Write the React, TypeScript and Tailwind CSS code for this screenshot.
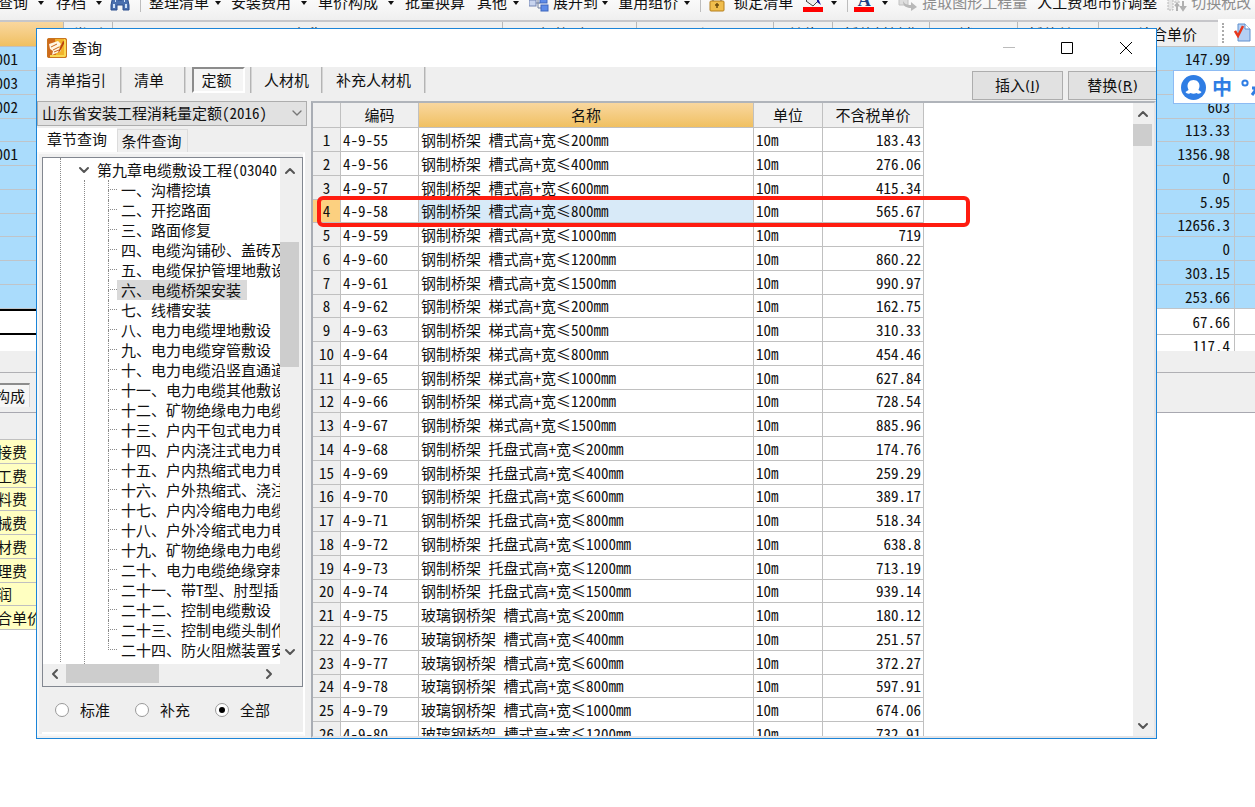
import React from 'react'
import { ChevronDown, ChevronLeft, ChevronRight, ChevronUp } from 'lucide-react'

const rows: [string, string, string][] = [
  ['4-9-55', '钢制桥架 槽式高+宽≤200mm', '183.43'],
  ['4-9-56', '钢制桥架 槽式高+宽≤400mm', '276.06'],
  ['4-9-57', '钢制桥架 槽式高+宽≤600mm', '415.34'],
  ['4-9-58', '钢制桥架 槽式高+宽≤800mm', '565.67'],
  ['4-9-59', '钢制桥架 槽式高+宽≤1000mm', '719'],
  ['4-9-60', '钢制桥架 槽式高+宽≤1200mm', '860.22'],
  ['4-9-61', '钢制桥架 槽式高+宽≤1500mm', '990.97'],
  ['4-9-62', '钢制桥架 梯式高+宽≤200mm', '162.75'],
  ['4-9-63', '钢制桥架 梯式高+宽≤500mm', '310.33'],
  ['4-9-64', '钢制桥架 梯式高+宽≤800mm', '454.46'],
  ['4-9-65', '钢制桥架 梯式高+宽≤1000mm', '627.84'],
  ['4-9-66', '钢制桥架 梯式高+宽≤1200mm', '728.54'],
  ['4-9-67', '钢制桥架 梯式高+宽≤1500mm', '885.96'],
  ['4-9-68', '钢制桥架 托盘式高+宽≤200mm', '174.76'],
  ['4-9-69', '钢制桥架 托盘式高+宽≤400mm', '259.29'],
  ['4-9-70', '钢制桥架 托盘式高+宽≤600mm', '389.17'],
  ['4-9-71', '钢制桥架 托盘式高+宽≤800mm', '518.34'],
  ['4-9-72', '钢制桥架 托盘式高+宽≤1000mm', '638.8'],
  ['4-9-73', '钢制桥架 托盘式高+宽≤1200mm', '713.19'],
  ['4-9-74', '钢制桥架 托盘式高+宽≤1500mm', '939.14'],
  ['4-9-75', '玻璃钢桥架 槽式高+宽≤200mm', '180.12'],
  ['4-9-76', '玻璃钢桥架 槽式高+宽≤400mm', '251.57'],
  ['4-9-77', '玻璃钢桥架 槽式高+宽≤600mm', '372.27'],
  ['4-9-78', '玻璃钢桥架 槽式高+宽≤800mm', '597.91'],
  ['4-9-79', '玻璃钢桥架 槽式高+宽≤1000mm', '674.06'],
  ['4-9-80', '玻璃钢桥架 槽式高+宽≤1200mm', '732.91'],
]

const sections = [
  '一、沟槽挖填',
  '二、开挖路面',
  '三、路面修复',
  '四、电缆沟铺砂、盖砖及',
  '五、电缆保护管埋地敷设',
  '六、电缆桥架安装',
  '七、线槽安装',
  '八、电力电缆埋地敷设',
  '九、电力电缆穿管敷设',
  '十、电力电缆沿竖直通道',
  '十一、电力电缆其他敷设',
  '十二、矿物绝缘电力电缆',
  '十三、户内干包式电力电',
  '十四、户内浇注式电力电',
  '十五、户内热缩式电力电',
  '十六、户外热缩式、浇注',
  '十七、户内冷缩电力电缆',
  '十八、户外冷缩式电力电',
  '十九、矿物绝缘电力电缆',
  '二十、电力电缆绝缘穿刺',
  '二十一、带T型、肘型插',
  '二十二、控制电缆敷设',
  '二十三、控制电缆头制作',
  '二十四、防火阻燃装置安',
]

const sheet = [
  ['001', '147.99'],
  ['003', ''],
  ['002', '603'],
  ['', '113.33'],
  ['001', '1356.98'],
  ['', '0'],
  ['', '5.95'],
  ['', '12656.3'],
  ['', '0'],
  ['', '303.15'],
  ['', '253.66'],
]

const fees = ['接费', '工费', '料费', '械费', '材费', '理费', '润', '合单价']

function Arrow() {
  return (
    <svg className="h-5 w-1.5 shrink-0" viewBox="0 0 6 20">
      <path d="M0 9h6L3 13z" fill="#111" />
    </svg>
  )
}

function Binoculars() {
  return (
    <svg className="h-5 w-5 shrink-0" viewBox="0 0 20 20">
      <path d="M3 4h5v4h4V4h5l2 9v5h-6v-5H7v5H1v-5z" fill="#4a6fae" stroke="#2c4f8e" />
      <path d="M3 12h2v4H3zM15 12h2v4h-2zM5 6h1v4H5zM14 6h1v4h-1z" fill="#cfe0f7" />
    </svg>
  )
}

function ExpandIcon() {
  return (
    <svg className="h-5 w-5 shrink-0" viewBox="0 0 20 20">
      <path d="M6 11h5M9 7v9h4" fill="none" stroke="#6a7a9a" />
      <rect x="0" y="8" width="7" height="6" fill="#c8d4ee" stroke="#7486b4" />
      <rect x="11" y="5" width="7" height="6" fill="#5d8be8" stroke="#3e66bd" />
      <rect x="12" y="13" width="7" height="6" fill="#5d8be8" stroke="#3e66bd" />
    </svg>
  )
}

function LockIcon() {
  return (
    <svg className="h-5 w-4 shrink-0" viewBox="0 0 16 20">
      <path d="M4 9V6a4 4 0 0 1 8 0v3" fill="none" stroke="#a0a0a0" strokeWidth="2" />
      <rect x="1" y="9" width="14" height="10" rx="1" fill="#f0bd4c" stroke="#b57f1c" />
      <path d="M8 11v5M6 13h4" stroke="#6b4a0c" strokeWidth="1.5" />
    </svg>
  )
}

function FillIcon() {
  return (
    <svg className="h-5 w-5 shrink-0" viewBox="0 0 20 20">
      <path d="M3 9l6-6 6 6-5 5z" fill="#eee" stroke="#444" />
      <path d="M14 4l4 9-4-3z" fill="#12129a" />
      <rect x="0" y="15" width="20" height="5" fill="#ff0000" />
    </svg>
  )
}

function FontColorIcon() {
  return (
    <span className="flex h-5 w-5 shrink-0 flex-col items-center justify-end font-['Liberation_Serif',serif] text-[18px] font-bold leading-[14px] text-[#1d3f86]">
      A
      <span className="h-[5px] w-5 bg-[#ff0000]" />
    </span>
  )
}

function GrayIcon() {
  return (
    <svg className="h-5 w-5 shrink-0" viewBox="0 0 20 20">
      <path d="M1 5h9v8H1z" fill="#dedede" stroke="#c2c2c2" />
      <path d="M5 9c2 4 5 4 8 4v-3l6 5-6 4v-3c-5 0-8-2-8-7z" fill="#b9b9b9" />
    </svg>
  )
}

function SwapIcon() {
  return (
    <svg className="h-5 w-5 shrink-0" viewBox="0 0 20 20">
      <path d="M1 7h5v11H1zM8 7h4v4H8z" fill="#e6e6e6" stroke="#b8b8b8" strokeDasharray="2 1" />
      <path d="M10 19v-6M8 14l2-2 2 2M16 9v8M14 15l2 3 2-3z" fill="#b8b8b8" stroke="#b0b0b0" strokeWidth="2" />
    </svg>
  )
}

function QueryIcon() {
  return (
    <svg className="h-5 w-5" viewBox="0 0 20 20">
      <rect width="20" height="20" rx="2" fill="#cf6a1c" />
      <path d="M8 1h11v17H9z" fill="#f2b22a" />
      <path d="M2 6l9-3 3 3-2 3 2 4-9 4 1-4-3-2z" fill="#fff6e2" />
      <path d="M4 9l6-3M6 12l6-3M7 14l5-2" stroke="#c9661a" />
      <path d="M16 3l2 1-5 9-2 2 1-3z" fill="#b8400f" />
      <path d="M18 1v17H3" stroke="#f9d952" strokeWidth="2" fill="none" />
      <rect x=".5" y=".5" width="19" height="19" rx="2" fill="none" stroke="#c8761e" />
    </svg>
  )
}

function Sep() {
  return <span className="h-5 w-px shrink-0 bg-[#bdbdbd]" />
}

function Toolbar() {
  return (
    <div className="flex h-[22px] items-end gap-2.5 overflow-hidden whitespace-nowrap border-b-2 border-[#c6c6ca] bg-gradient-to-b from-[#fafafa] to-[#efefef] pb-2 leading-5 [&>svg]:translate-y-0">
      <button className="-ml-0.5 shrink-0">查询</button>
      <Arrow />
      <button className="ml-0.5 shrink-0">存档</button>
      <Arrow />
      <span className="-ml-0.5 flex"><Binoculars /></span>
      <Sep />
      <button className="-ml-0.5 shrink-0">整理清单</button>
      <span className="-ml-1 flex"><Arrow /></span>
      <button className="shrink-0">安装费用</button>
      <Arrow />
      <button className="ml-px shrink-0">单价构成</button>
      <Arrow />
      <button className="ml-px shrink-0">批量换算</button>
      <button className="ml-0.5 shrink-0">其他</button>
      <span className="-ml-1 flex"><Arrow /></span>
      <ExpandIcon />
      <button className="-ml-1.5 shrink-0">展开到</button>
      <span className="-ml-1.5 flex"><Arrow /></span>
      <button className="shrink-0">重用组价</button>
      <span className="-ml-1 flex"><Arrow /></span>
      <Sep />
      <span className="-ml-0.5 flex"><LockIcon /></span>
      <button className="-ml-0.5 shrink-0">锁定清单</button>
      <FillIcon />
      <span className="-ml-0.5 flex"><Arrow /></span>
      <Sep />
      <span className="-ml-1 flex"><FontColorIcon /></span>
      <span className="-ml-0.5 flex"><Arrow /></span>
      <GrayIcon />
      <button className="-ml-1.5 shrink-0 text-[#8d8d8d]">提取图形工程量</button>
      <button className="shrink-0">人工费地市价调整</button>
      <SwapIcon />
      <button className="-ml-1.5 shrink-0 text-[#8d8d8d]">切换税改</button>
    </div>
  )
}

function Background() {
  const head = 'flex shrink-0 items-center justify-center border-r border-[#b8b8b8]'
  return (
    <div className="overflow-hidden">
      <Toolbar />
      <div className="flex h-[25px] overflow-hidden whitespace-nowrap border-b border-[#c0c0c0] bg-[#efefef]">
        <div className="w-16 shrink-0 border-r border-[#b8b8b8] bg-gradient-to-b from-[#f9d79e] to-[#f0c060]" />
        <div className={head + ' w-[49px]'}>类别</div>
        <div className={head + ' w-[390px]'}>名称</div>
        <div className={head + ' w-[134px]'}>规格型号</div>
        <div className={head + ' w-[137px]'}>工程量</div>
        <div className={head + ' w-[59px]'}>单位</div>
        <div className={head + ' w-[97px]'}>暂估材料费</div>
        <div className={head + ' w-[88px]'}>锁量</div>
        <div className={head + ' w-[81px]'}>暂估单价</div>
        <div className="flex min-w-[136px] grow items-center justify-center pr-5">综合单价</div>
      </div>
      <div className="bg-[#aadcfc]">
        {sheet.map((r, i) => (
          <div key={i} className="flex h-6 border-b border-[#c0c4c8] nth-[4n]:h-[23px]">
            <span className="flex w-[18px] items-center justify-end">{r[0]}</span>
            <span className="flex grow items-center justify-end border-r border-[#c0c4c8] pr-1">{r[1]}</span>
            <span className="w-5" />
          </div>
        ))}
      </div>
      <div className="flex h-[26px] bg-white">
        <span className="w-9 border-y-2 border-black" />
        <span className="flex grow items-center justify-end border-b border-r border-[#c0c0c0] pr-1">67.66</span>
        <span className="w-5 border-b border-[#c0c0c0]" />
      </div>
      <div className="flex h-4 overflow-hidden">
        <span className="flex h-[22px] grow items-center justify-end border-r border-[#c0c0c0] pr-1">117.4</span>
        <span className="w-5" />
      </div>
      <div className="h-[22px] border-b border-[#b0b0b4] bg-[#efefef]" />
      <div className="flex h-10 items-center border-b border-[#a8a8b0] bg-[#efefef] pt-1">
        <button className="flex h-6 w-[30px] items-center justify-end whitespace-nowrap border-r border-t-2 border-r-[#d8d8d8] border-t-[#8c8c8c] bg-[#f6f6f6] pr-1">构成</button>
      </div>
      <div className="w-16">
        <div className="h-[27px] border-b border-[#c0c0c0] bg-[#efefef]" />
        {fees.map((f) => (
          <div key={f} className="flex h-6 items-center border-b border-[#c0c0c0] bg-[#ffffc1] -indent-[3px] nth-[4n]:h-[23px]">
            {f}
          </div>
        ))}
      </div>
    </div>
  )
}

function TitleBar() {
  return (
    <div className="flex h-[38px] shrink-0 items-center bg-white pl-2.5">
      <QueryIcon />
      <h1 className="ml-[5px] grow">查询</h1>
      <button aria-label="最小化" className="flex w-[58px] justify-center">
        <svg className="h-3 w-3" viewBox="0 0 12 12"><path d="M0 5.5h12" stroke="#bbb" /></svg>
      </button>
      <button aria-label="最大化" className="flex w-[58px] justify-center">
        <svg className="h-3 w-3" viewBox="0 0 12 12"><path d="M.5.5h11v11H.5z" fill="none" stroke="#000" /></svg>
      </button>
      <button aria-label="关闭" className="flex w-[60px] justify-center">
        <svg className="h-3 w-3" viewBox="0 0 12 12"><path d="M0 0l12 12M12 0L0 12" stroke="#000" /></svg>
      </button>
    </div>
  )
}

function ActionBar() {
  const line = <span className="h-[26px] w-0.5 border-l border-r border-l-[#b4b4b4] border-r-[#d4d4d4]" />
  return (
    <div className="flex h-[34px] shrink-0 items-start">
      <div className="flex h-[26px] grow items-center">
        <button className="px-[9px] pr-3.5">清单指引</button>
        {line}
        <button className="px-3 pr-5">清单</button>
        {line}
        <button className="ml-1.5 mr-[5px] h-[26px] w-[53px] border-2 border-b-white border-l-[#8c8c8c] border-r-white border-t-[#8c8c8c] bg-[#f5f5f5] pr-1">定额</button>
        {line}
        <button className="px-3">人材机</button>
        {line}
        <button className="px-[13px]">补充人材机</button>
        {line}
      </div>
      <button className="mr-[5px] mt-1 h-[29px] w-[91px] border border-[#adadad] bg-[#e1e1e1]">
        插入<span className="font-['DejaVu_Sans',sans-serif] text-sm">(<u>I</u>)</span>
      </button>
      <button className="mt-1 h-[29px] w-[88px] border border-r-0 border-[#adadad] bg-[#e1e1e1]">
        替换<span className="font-['DejaVu_Sans',sans-serif] text-sm">(<u>R</u>)</span>
      </button>
    </div>
  )
}

function Tree() {
  const dots = 'border-dotted border-[#8a8a8a]'
  return (
    <div className="flex min-h-0 grow flex-col border border-[#828790] bg-white">
      <div className="flex min-h-0 grow">
        <div className="min-w-0 grow overflow-hidden whitespace-nowrap pb-0.5">
          <div className={'ml-[17px] h-full border-l pt-0.5 ' + dots}>
            <div className="flex h-5 items-center">
              <ChevronDown className="ml-[15px] size-4 shrink-0 text-[#555]" strokeWidth={3} />
              <span className="ml-[5px]">第九章电缆敷设工程(03040</span>
            </div>
            <div className={'ml-[23px] border-l pb-1 pl-[23px] ' + dots}>
              <ul>
                {sections.map((s, i) => (
                  <li key={s} className="flex h-5 items-center">
                    <span className="w-[9px] shrink-0">
                      <span className={'block h-2.5 border-b border-l ' + dots} />
                      <span className={i < sections.length - 1 ? 'block h-2.5 border-l ' + dots : 'block h-2.5'} />
                    </span>
                    <span className={i === 5 ? 'h-5 bg-[#d9d9d9] pl-1 pr-1.5 leading-5' : 'h-5 pl-1 leading-5'}>{s}</span>
                  </li>
                ))}
              </ul>
            </div>
          </div>
        </div>
        <div className="flex w-[22px] shrink-0 flex-col bg-[#efefef] pr-[3px]">
          <div className="flex h-[84px] justify-center pt-[5px]"><ChevronUp className="size-4 text-[#555]" strokeWidth={3} /></div>
          <div className="h-[125px] bg-[#cdcdcd]" />
          <div className="flex grow items-end justify-center pb-1"><ChevronDown className="size-4 text-[#555]" strokeWidth={3} /></div>
        </div>
      </div>
      <div className="flex h-[22px] shrink-0 items-start bg-[#efefef]">
        <ChevronLeft className="ml-1 mt-0.5 size-4 text-[#555]" strokeWidth={3} />
        <div className="ml-[3px] h-[19px] w-[93px] bg-[#cdcdcd]" />
        <div className="grow" />
        <ChevronRight className="mr-[25px] mt-0.5 size-4 text-[#555]" strokeWidth={3} />
      </div>
    </div>
  )
}

function Radio({ label, on }: { label: string; on?: boolean }) {
  return (
    <label className="flex w-20 items-center gap-[11px]">
      <input
        type="radio"
        name="scope"
        defaultChecked={on}
        className="flex size-3.5 appearance-none items-center justify-center rounded-full border border-[#999] bg-white before:size-1.5 before:rounded-full checked:before:bg-black"
      />
      {label}
    </label>
  )
}

function Sidebar() {
  return (
    <div className="flex w-[270px] shrink-0 flex-col">
      <div className="relative shrink-0">
        <select aria-label="定额库" className="h-[25px] w-full appearance-none border border-[#adadad] bg-[#e1e1e1] pb-0.5 pl-1">
          <option>山东省安装工程消耗量定额(2016)</option>
        </select>
        <ChevronDown className="pointer-events-none absolute right-0.5 top-1 size-4 text-[#777]" />
      </div>
      <div className="flex h-[26px] shrink-0 items-end pt-1">
        <button className="h-6 w-20 bg-white pb-0.5">章节查询</button>
        <button className="h-[23px] w-[71px] border border-b-0 border-[#dcdcdc] pr-0.5">条件查询</button>
      </div>
      <div className="mb-0.5 mr-0.5 flex min-h-0 grow flex-col border-2 border-[#f8f8f8] border-r-[#fff] pl-[3px] pt-[3px]">
        <Tree />
        <div className="flex h-[47px] shrink-0 items-center border-b-2 border-white pl-[13px]">
          <Radio label="标准" />
          <Radio label="补充" />
          <Radio label="全部" on />
        </div>
      </div>
    </div>
  )
}

function QuotaTable() {
  const th = 'border-b border-r border-[#c0c0c0] p-0 font-normal'
  const td = 'border-b border-r border-[#c0c0c0] p-0 leading-[22px]'
  return (
    <div className="relative flex min-w-0 grow border-2 border-[#e4e4e6] border-l-[#a9adb4] border-t-[#b0b4ba] bg-white">
      <div className="min-w-0 grow overflow-hidden whitespace-nowrap">
        <table className="w-[611px] table-fixed border-separate border-spacing-0">
          <thead>
            <tr className="h-[25px] bg-[#efefef]">
              <th className={th + ' w-7'} />
              <th className={th + ' w-[78px]'}>编码</th>
              <th className={th + ' w-[335px] bg-gradient-to-b from-[#f9d79e] to-[#f0c060]'}>名称</th>
              <th className={th + ' w-[69px]'}>单位</th>
              <th className={th + ' w-[101px]'}>不含税单价</th>
            </tr>
          </thead>
          <tbody>
            {rows.map((r, i) => (
              <tr key={r[0]} className="h-6 nth-[4n]:h-[23px]">
                <td className={td + ' text-center ' + (i === 3 ? 'bg-[#fcd080]' : 'bg-[#efefef]')}>{i + 1}</td>
                <td className={td + ' pl-0.5'}>{r[0]}</td>
                <td className={td + ' pl-0.5 ' + (i === 3 ? 'bg-[#d8eaf8]' : '')}>{r[1]}</td>
                <td className={td + ' pl-0.5'}>10m</td>
                <td className={td + ' pr-0.5 text-right'}>{r[2]}</td>
              </tr>
            ))}
          </tbody>
        </table>
      </div>
      <div className="flex w-[21px] shrink-0 flex-col bg-[#efefef] pr-0.5">
        <div className="flex h-[21px] items-center justify-center"><ChevronUp className="size-4 text-[#555]" strokeWidth={3} /></div>
        <div className="h-[22px] bg-[#cdcdcd]" />
        <div className="flex grow items-end justify-center pb-0.5"><ChevronDown className="size-4 text-[#555]" strokeWidth={3} /></div>
      </div>
      {/* marker around the picked row */}
      <div className="absolute left-1 top-[93px] h-[31px] w-[653px] rounded-md border-4 border-[#ff1c10]" />
    </div>
  )
}

export default function App() {
  return (
    <div className="relative min-h-screen overflow-hidden bg-white font-['Noto_Sans_CJK_SC',sans-serif] text-[15px] leading-5 text-[#111] [font-feature-settings:'hwid']">
      <Background />

      <div className="absolute right-0 top-[19px] flex h-[27px] w-[37px] items-center bg-white pl-1">
        <span className="h-5 border-l-2 border-dotted border-[#aaa]" />
        <svg className="ml-2.5 h-5 w-5" viewBox="0 0 20 20">
          <path d="M4 1h7l5 5v12H4z" fill="#b5d0f4" stroke="#5f8fce" />
          <path d="M11 1v5h5" fill="#fff" stroke="#5f8fce" />
          <path d="M1 8l3 5L9 3" fill="none" stroke="#e8371c" strokeWidth="2.5" />
        </svg>
      </div>

      <section className="absolute bottom-[68px] left-9 right-[98px] top-7 flex flex-col border border-[#1b84d8] bg-[#efefef]">
        <TitleBar />
        <ActionBar />
        <div className="flex min-h-0 grow gap-1">
          <Sidebar />
          <QuotaTable />
        </div>
      </section>

      <div className="absolute right-0 top-[70px] flex h-[34px] w-[82px] items-center overflow-hidden border border-r-0 border-[#8dbbf3] bg-white pl-[7px]">
        <svg className="h-[25px] w-[25px] shrink-0" viewBox="0 0 25 25">
          <circle cx="12.5" cy="12.5" r="12.5" fill="#2f7de4" />
          <path d="M12.5 5c4 0 6 3 6 6 0 2-1 3-1 4l3 2c-1 2-4 2-5 1-2 1-4 1-6 0-1 1-4 1-5-1l3-2c0-1-1-2-1-4 0-3 2-6 6-6z" fill="#fff" />
        </svg>
        <span className="ml-1.5 shrink-0 text-[20px] font-bold text-[#2f7de4]">中</span>
        <svg className="ml-2 h-5 w-4 shrink-0" viewBox="0 0 16 20">
          <circle cx="5" cy="6" r="2.6" fill="none" stroke="#2f7de4" strokeWidth="2" />
          <path d="M12 11h3v3l-3 4" fill="none" stroke="#2f7de4" strokeWidth="3" />
        </svg>
      </div>
    </div>
  )
}
